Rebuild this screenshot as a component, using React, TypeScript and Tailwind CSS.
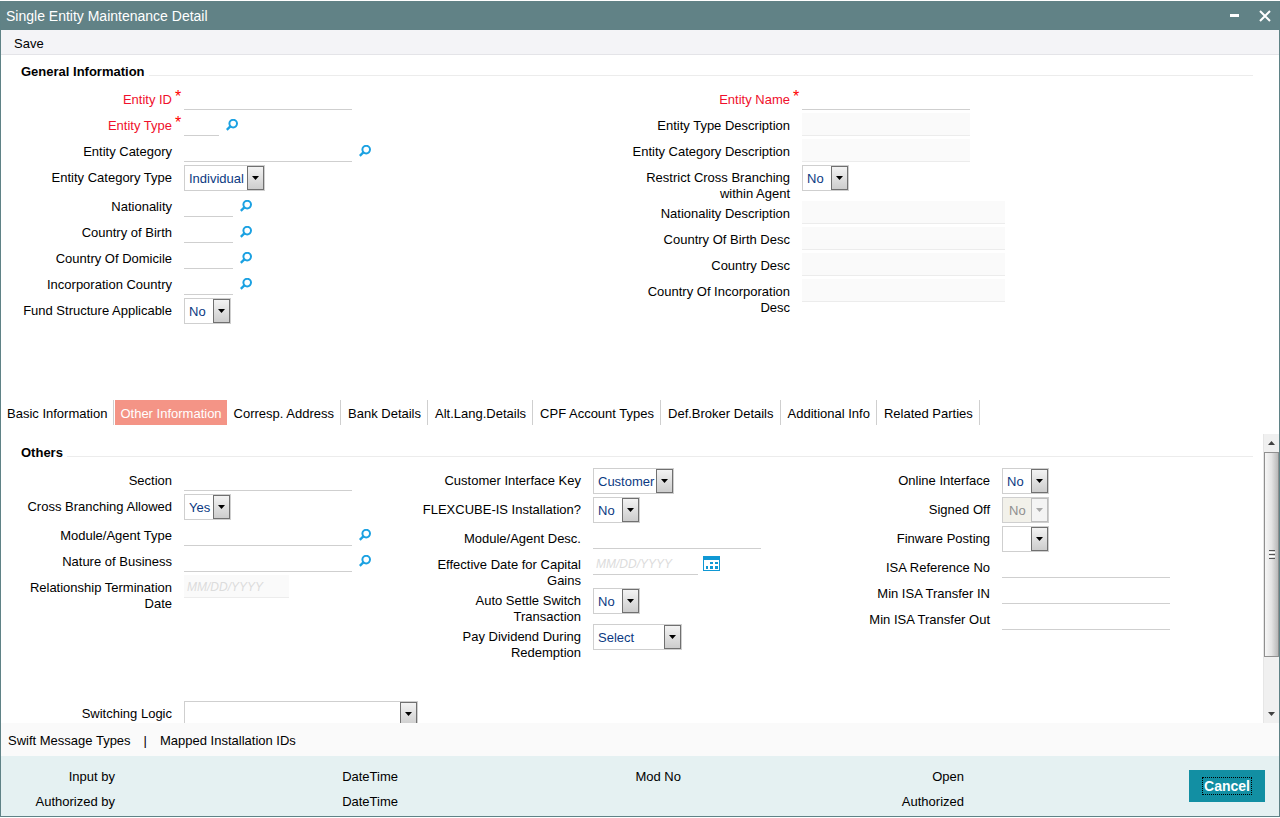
import { useId, useState } from 'react';
import type { ReactNode } from 'react';

const tabs = [
  'Basic Information',
  'Other Information',
  'Corresp. Address',
  'Bank Details',
  'Alt.Lang.Details',
  'CPF Account Types',
  'Def.Broker Details',
  'Additional Info',
  'Related Parties',
];

const audit = [
  ['Input by', 'Authorized by'],
  ['DateTime', 'DateTime'],
  ['Mod No', ''],
  ['Open', 'Authorized'],
];

function SearchIcon() {
  return (
    <svg viewBox="0 0 12 12" className="h-3 w-3" fill="none" stroke="#1ba1e2" strokeWidth="2">
      <circle cx="7.2" cy="4.6" r="3.8" />
      <path d="M4.6 7.2.8 10.8" strokeWidth="2.4" />
    </svg>
  );
}

function CalendarIcon() {
  return (
    <svg viewBox="0 0 17 15" className="h-[15px] w-[17px]" fill="#1098d4">
      <path d="M0 0h17v15H0zM1 4v10h15V4z" fillRule="evenodd" />
      <path d="M7 6h3v2H7zM12 6h3v2h-3zM3 10h2v3H3zM7 10h3v3H7zM12 10h3v3h-3z" />
    </svg>
  );
}

type RowProps = {
  id: string;
  label: string;
  required?: boolean;
  children: ReactNode;
};

function Row({ id, label, required, children }: RowProps) {
  return (
    <div className="flex items-start">
      <label
        htmlFor={id}
        className={`-mb-px w-[164px] shrink-0 pt-[5px] text-right leading-4 ${required ? 'text-[#f0102c]' : ''}`}
      >
        {label}
      </label>
      <span className="w-3 shrink-0 pt-0.5 text-center text-base leading-4 text-[#f00]">
        {required ? '*' : ''}
      </span>
      {children}
    </div>
  );
}

type TextFieldProps = {
  label: string;
  width?: string;
  required?: boolean;
  disabled?: boolean;
  lookup?: boolean;
  date?: boolean;
};

function TextField({ label, width = 'w-[168px]', required, disabled, lookup, date }: TextFieldProps) {
  const id = useId();

  return (
    <Row id={id} label={label} required={required}>
      <div className="flex h-[26px] items-start">
        <input
          id={id}
          type="text"
          disabled={disabled}
          placeholder={date ? 'MM/DD/YYYY' : undefined}
          className={`h-[23px] border-b px-[3px] text-[#0b3a82] outline-none placeholder:text-xs placeholder:italic placeholder:text-[#dcdcdc] ${width} ${
            disabled ? 'border-[#ececec] bg-[#fafafa]' : 'border-[#cfcfcf] bg-white'
          }`}
        />
        {lookup ? (
          <button type="button" className="ml-[7px] mt-1.5" aria-label={`Search ${label}`}>
            <SearchIcon />
          </button>
        ) : null}
        {date && !disabled ? (
          <button type="button" className="ml-[5px] mt-1" aria-label={`Pick ${label}`}>
            <CalendarIcon />
          </button>
        ) : null}
      </div>
    </Row>
  );
}

type SelectFieldProps = {
  label: string;
  options?: string[];
  width?: string;
  disabled?: boolean;
};

function SelectField({ label, options = ['No', 'Yes'], width = 'w-[47px]', disabled }: SelectFieldProps) {
  const id = useId();

  return (
    <Row id={id} label={label}>
      <div className={`relative mb-[3px] h-[26px] ${width}`}>
        <select
          id={id}
          disabled={disabled}
          className={`h-full w-full appearance-none border border-[#cfcfcf] pt-0.5 opacity-100 outline-none ${
            disabled ? 'bg-[#f2f1ea] pl-1.5 text-[#8f8f8f]' : 'bg-white pl-1 text-[#0b3a82]'
          }`}
        >
          {options.map((option) => (
            <option key={option}>{option}</option>
          ))}
        </select>
        <span
          className={`pointer-events-none absolute right-px top-px flex h-6 w-[17px] items-center justify-center border ${
            disabled
              ? 'border-[#bdbdbd] bg-[#f4f4f4] text-[#a8a8a8]'
              : 'border-[#707070] bg-linear-to-b from-[#f3f3f3] to-[#cdcdcd] text-black'
          }`}
        >
          <svg viewBox="0 0 7 4" className="h-1 w-[7px]" fill="currentColor">
            <path d="M0 0h7L3.5 4z" />
          </svg>
        </span>
      </div>
    </Row>
  );
}

function SectionHeading({ children }: { children: ReactNode }) {
  return (
    <div className="mb-[7px] flex items-center gap-1 pl-[13px]">
      <h2 className="pt-px text-[13px] font-bold leading-4">{children}</h2>
      <span className="mt-2 h-px flex-1 bg-[#ececec]" />
    </div>
  );
}

function ScrollBar() {
  return (
    <div className="flex w-4 shrink-0 flex-col border-l border-[#e6e6e6] bg-[#f0f0f0]" aria-hidden="true">
      <div className="flex h-[18px] items-center justify-center">
        <svg viewBox="0 0 7 4" className="h-1 w-[7px]" fill="#404040">
          <path d="M0 4h7L3.5 0z" />
        </svg>
      </div>
      <div className="flex flex-1 flex-col">
        <div className="flex h-[81%] flex-col items-center justify-center gap-px border border-[#8f8f8f] bg-linear-to-r from-[#f6f6f6] via-[#e4e4e4] to-[#b9b9b9]">
          <span className="h-px w-1.5 bg-[#555]" />
          <span className="h-px w-1.5 bg-white" />
          <span className="h-px w-1.5 bg-[#555]" />
          <span className="h-px w-1.5 bg-white" />
          <span className="h-px w-1.5 bg-[#555]" />
        </div>
      </div>
      <div className="flex h-[18px] items-center justify-center">
        <svg viewBox="0 0 7 4" className="h-1 w-[7px]" fill="#404040">
          <path d="M0 0h7L3.5 4z" />
        </svg>
      </div>
    </div>
  );
}

export default function App() {
  const [activeTab, setActiveTab] = useState('Other Information');

  return (
    <div className="h-screen bg-white py-px font-['Liberation_Sans',Arial,sans-serif] text-[13px] text-black">
      <div className="flex h-full flex-col border-x border-b border-[#5f8286]">
        <header className="flex h-[29px] shrink-0 items-center justify-between bg-[#618286] pl-[5px] pr-2 text-white">
          <h1 className="text-sm">Single Entity Maintenance Detail</h1>
          <div className="flex items-center gap-5">
            <button type="button" aria-label="Minimize">
              <svg viewBox="0 0 10 12" className="h-3 w-2.5" fill="white">
                <path d="M1 4h9v3H1z" />
              </svg>
            </button>
            <button type="button" aria-label="Close">
              <svg viewBox="0 0 12 12" className="h-3 w-3" stroke="white" strokeWidth="2">
                <path d="M1 1l10 10M11 1 1 11" />
              </svg>
            </button>
          </div>
        </header>

        <div className="flex h-[25px] shrink-0 items-center border-b border-[#e4e4e8] bg-[#f4f4f7] pl-[13px]">
          <button type="button" className="pt-1">
            Save
          </button>
        </div>

        <section className="shrink-0 pb-[73px] pl-[7px] pr-[26px] pt-2">
          <SectionHeading>General Information</SectionHeading>
          <div className="mr-[9px] grid grid-cols-2 items-start">
            <div>
              <TextField label="Entity ID" required />
              <TextField label="Entity Type" required lookup width="w-[35px]" />
              <TextField label="Entity Category" lookup />
              <SelectField
                label="Entity Category Type"
                options={['Individual', 'Corporate']}
                width="w-[81px]"
              />
              <TextField label="Nationality" lookup width="w-[49px]" />
              <TextField label="Country of Birth" lookup width="w-[49px]" />
              <TextField label="Country Of Domicile" lookup width="w-[49px]" />
              <TextField label="Incorporation Country" lookup width="w-[49px]" />
              <SelectField label="Fund Structure Applicable" />
            </div>
            <div>
              <TextField label="Entity Name" required />
              <TextField label="Entity Type Description" disabled />
              <TextField label="Entity Category Description" disabled />
              <SelectField label="Restrict Cross Branching within Agent" />
              <TextField label="Nationality Description" disabled width="w-[203px]" />
              <TextField label="Country Of Birth Desc" disabled width="w-[203px]" />
              <TextField label="Country Desc" disabled width="w-[203px]" />
              <TextField label="Country Of Incorporation Desc" disabled width="w-[203px]" />
            </div>
          </div>
        </section>

        <nav className="mb-[9px] flex h-[25px] shrink-0" aria-label="Entity sections">
          {tabs.map((tab) => (
            <button
              key={tab}
              type="button"
              onClick={() => setActiveTab(tab)}
              className={`whitespace-nowrap pt-0.5 ${
                tab === activeTab
                  ? 'ml-px bg-[#f49486] px-[5px] text-white'
                  : 'border-r border-[#cfcfcf] pl-[7px] pr-1.5 first:pl-1.5 hover:bg-[#f4f4f7]'
              }`}
            >
              {tab}
            </button>
          ))}
        </nav>

        <div className="flex min-h-0 flex-1">
          <section className="min-w-0 flex-1 overflow-hidden pl-[7px] pr-2.5 pt-2.5">
            <SectionHeading>Others</SectionHeading>
            <div className="mr-[18px] grid grid-cols-3 items-start">
              <div>
                <TextField label="Section" />
                <SelectField label="Cross Branching Allowed" options={['Yes', 'No']} />
                <TextField label="Module/Agent Type" lookup />
                <TextField label="Nature of Business" lookup />
                <TextField label="Relationship Termination Date" date disabled width="w-[105px]" />
              </div>
              <div>
                <SelectField
                  label="Customer Interface Key"
                  options={['Customer', 'Agent']}
                  width="w-[81px]"
                />
                <SelectField label="FLEXCUBE-IS Installation?" />
                <TextField label="Module/Agent Desc." />
                <TextField label="Effective Date for Capital Gains" date width="w-[105px]" />
                <SelectField label="Auto Settle Switch Transaction" />
                <SelectField
                  label="Pay Dividend During Redemption"
                  options={['Select', 'Yes', 'No']}
                  width="w-[89px]"
                />
              </div>
              <div>
                <SelectField label="Online Interface" />
                <SelectField label="Signed Off" disabled />
                <SelectField label="Finware Posting" options={['', 'Yes', 'No']} />
                <TextField label="ISA Reference No" />
                <TextField label="Min ISA Transfer IN" />
                <TextField label="Min ISA Transfer Out" />
              </div>
            </div>
            <div className="pt-[41px]">
              <SelectField label="Switching Logic" options={['']} width="w-[234px]" />
            </div>
          </section>
          <ScrollBar />
        </div>

        <div className="flex h-[33px] shrink-0 items-center gap-[13px] bg-[#fafafa] pl-[7px] pt-0.5">
          <a href="#swift-message-types">Swift Message Types</a>
          <span>|</span>
          <a href="#mapped-installation-ids">Mapped Installation IDs</a>
        </div>

        <footer className="flex h-[60px] shrink-0 items-center bg-[#e5f1f2] pl-[7px] pr-3.5">
          <div className="grid flex-1 grid-cols-4 pt-1.5">
            {audit.map(([first, second]) => (
              <div key={first} className="w-[107px] text-right leading-[25px]">
                <div className="h-[25px]">{first}</div>
                <div className="h-[25px]">{second}</div>
              </div>
            ))}
          </div>
          <button
            type="button"
            className="ml-[49px] flex h-8 w-[76px] items-center justify-center bg-[#128fa3] text-sm font-bold text-white"
          >
            <span className="border border-dotted border-black px-px leading-4">Cancel</span>
          </button>
        </footer>
      </div>
    </div>
  );
}
